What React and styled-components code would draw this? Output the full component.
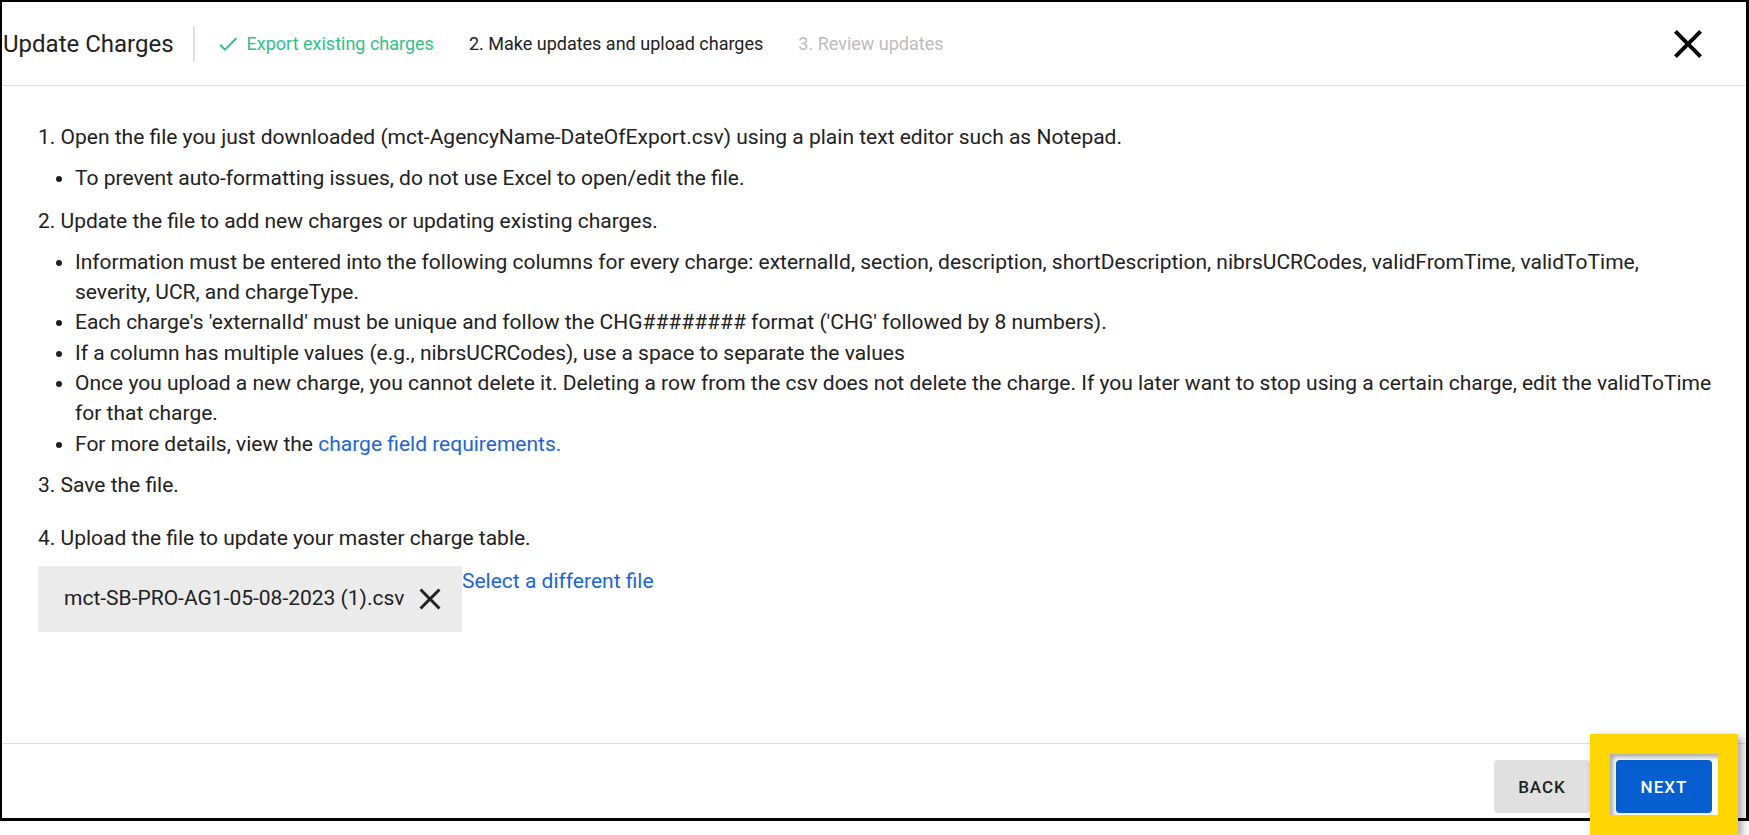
import React from "react";
import styled, { createGlobalStyle } from "styled-components";
import { MdCheck, MdClose } from "react-icons/md";

const GlobalStyle = createGlobalStyle`
  body {
    margin: 0;
    background: #fff;
    font-family: Roboto, "Liberation Sans", sans-serif;
    color: #212121;
  }
`;

const Page = styled.div`
  position: relative;
  width: 1749px;
  height: 835px;
  overflow: hidden;
`;

const Modal = styled.div`
  box-sizing: border-box;
  width: 1749px;
  height: 821px;
  border: solid #000;
  border-width: 2px 3px 3px 2px;
  display: flex;
  flex-direction: column;
  background: #fff;
`;

const Header = styled.header`
  box-sizing: border-box;
  flex: none;
  height: 84px;
  display: flex;
  align-items: center;
  padding: 0 34px 0 1px;
  border-bottom: 1px solid #e0e0e0;
`;

const Title = styled.h1`
  margin: 0;
  font-size: 24px;
  font-weight: 400;
  line-height: 1;
  color: #212121;
`;

const Separator = styled.span`
  width: 2px;
  height: 36px;
  margin-left: 19px;
  background: #e0e0e0;
`;

const Steps = styled.ol`
  display: flex;
  align-items: center;
  gap: 35px;
  margin: 0 0 0 21px;
  padding: 0;
  list-style: none;
`;

const stepColors = {
  done: "#2cc38a",
  active: "#212121",
  pending: "#bdbdbd",
};

const Step = styled.li`
  display: flex;
  align-items: center;
  gap: 7px;
  font-size: 18px;
  color: ${({ $status }) => stepColors[$status]};
`;

const CloseButton = styled.button`
  margin-left: auto;
  display: flex;
  padding: 0;
  border: 0;
  background: none;
  color: #000;
  cursor: pointer;
`;

const Body = styled.main`
  flex: 1;
  padding: 36px 30px 0 36px;
  font-size: 21px;
  line-height: 30.3px;
`;

const Section = styled.section`
  margin-top: ${({ $gap }) => $gap}px;
`;

const StepText = styled.p`
  margin: 0;
`;

const SubList = styled.ul`
  margin: 11px 0 0;
  padding-left: 37px;
`;

const Link = styled.a`
  color: #1a64db;
  text-decoration: none;
  cursor: pointer;
`;

const UploadRow = styled.div`
  display: flex;
  align-items: flex-start;
  margin-top: 12px;
`;

const FileChip = styled.div`
  box-sizing: border-box;
  flex: none;
  width: 424px;
  height: 66px;
  display: flex;
  align-items: center;
  gap: 8px;
  padding: 0 12px 0 26px;
  background: #ebebeb;
  color: #212121;
`;

const FileName = styled.span`
  flex: none;
  white-space: nowrap;
`;

const ChipRemove = styled.button`
  flex: none;
  display: flex;
  padding: 0;
  border: 0;
  background: none;
  color: #212121;
  cursor: pointer;
`;

const Footer = styled.footer`
  box-sizing: border-box;
  flex: none;
  height: 75px;
  display: flex;
  justify-content: flex-end;
  align-items: flex-start;
  gap: 26px;
  padding: 16px 34px 0 0;
  border-top: 1px solid #e0e0e0;
`;

const Button = styled.button`
  width: 96px;
  height: 53px;
  border: 0;
  border-radius: 4px;
  font-family: Roboto, "Liberation Sans", sans-serif;
  font-size: 17px;
  font-weight: 500;
  letter-spacing: 1px;
  text-transform: uppercase;
  background: ${({ $primary }) => ($primary ? "#055fd0" : "#e0e0e0")};
  color: ${({ $primary }) => ($primary ? "#fff" : "#212121")};
  cursor: pointer;
`;

const Highlight = styled.div`
  position: absolute;
  left: 1590px;
  top: 734px;
  width: 148px;
  height: 101px;
  box-sizing: border-box;
  border: 20px solid #ffd500;
  box-shadow: 4px 3px 8px rgba(0, 0, 0, 0.35),
    inset 3px 3px 5px rgba(0, 0, 0, 0.35);
  pointer-events: none;
`;

const steps = [
  { label: "Export existing charges", status: "done" },
  { label: "2. Make updates and upload charges", status: "active" },
  { label: "3. Review updates", status: "pending" },
];

export default function App() {
  return (
    <Page>
      <GlobalStyle />
      <Modal>
        <Header>
          <Title>Update Charges</Title>
          <Separator />
          <Steps>
            {steps.map((s) => (
              <Step key={s.label} $status={s.status}>
                {s.status === "done" && <MdCheck size={24} />}
                {s.label}
              </Step>
            ))}
          </Steps>
          <CloseButton aria-label="Close">
            <MdClose size={48} />
          </CloseButton>
        </Header>

        <Body>
          <Section $gap={0}>
            <StepText>
              1. Open the file you just downloaded
              (mct-AgencyName-DateOfExport.csv) using a plain text editor such
              as Notepad.
            </StepText>
            <SubList>
              <li>
                To prevent auto-formatting issues, do not use Excel to
                open/edit the file.
              </li>
            </SubList>
          </Section>

          <Section $gap={12}>
            <StepText>
              2. Update the file to add new charges or updating existing
              charges.
            </StepText>
            <SubList>
              <li>
                Information must be entered into the following columns for
                every charge: externalId, section, description,
                shortDescription, nibrsUCRCodes, validFromTime, validToTime,
                severity, UCR, and chargeType.
              </li>
              <li>
                Each charge's 'externalId' must be unique and follow the
                CHG######## format ('CHG' followed by 8 numbers).
              </li>
              <li>
                If a column has multiple values (e.g., nibrsUCRCodes), use a
                space to separate the values
              </li>
              <li>
                Once you upload a new charge, you cannot delete it. Deleting a
                row from the csv does not delete the charge. If you later want
                to stop using a certain charge, edit the validToTime for that
                charge.
              </li>
              <li>
                For more details, view the{" "}
                <Link>charge field requirements.</Link>
              </li>
            </SubList>
          </Section>

          <Section $gap={11}>
            <StepText>3. Save the file.</StepText>
          </Section>

          <Section $gap={23}>
            <StepText>
              4. Upload the file to update your master charge table.
            </StepText>
            <UploadRow>
              <FileChip>
                <FileName>mct-SB-PRO-AG1-05-08-2023 (1).csv</FileName>
                <ChipRemove aria-label="Remove file">
                  <MdClose size={36} />
                </ChipRemove>
              </FileChip>
              <Link>Select a different file</Link>
            </UploadRow>
          </Section>
        </Body>

        <Footer>
          <Button>Back</Button>
          <Button $primary>Next</Button>
        </Footer>
      </Modal>
      <Highlight />
    </Page>
  );
}
